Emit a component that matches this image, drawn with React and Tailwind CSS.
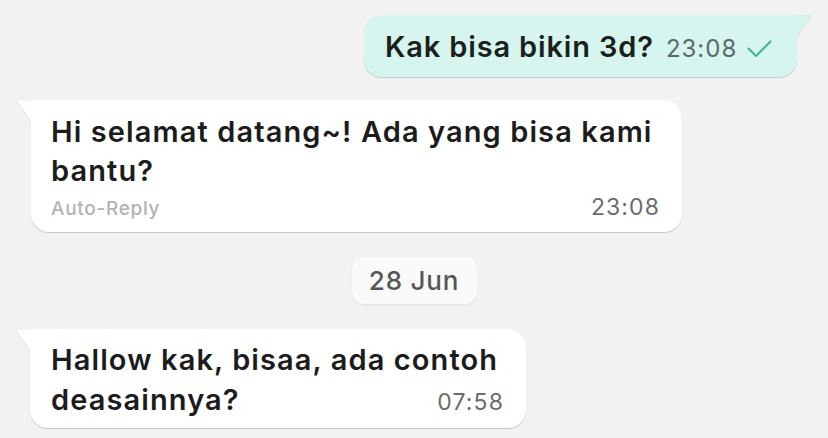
import React from "react";

function TailLeft() {
  return (
    <svg className="absolute left-[-15px] top-0" width="16" height="26" viewBox="0 0 16 26">
      <path d="M16 0 H3 Q0 0 1.6 2.4 L12 17 Q16 22 16 26 Z" fill="#ffffff" stroke="#d6d6d6" strokeWidth="0.6" />
      <rect x="15" y="0.6" width="2" height="26" fill="#ffffff" />
    </svg>
  );
}

function TailRight() {
  return (
    <svg className="absolute right-[-15px] top-0" width="16" height="26" viewBox="0 0 16 26">
      <path d="M0 0 H13 Q16 0 14.4 2.4 L4 17 Q0 22 0 26 Z" fill="#d5f5ee" stroke="#c4d6d1" strokeWidth="0.6" />
      <rect x="-1" y="0.6" width="2" height="26" fill="#d5f5ee" />
    </svg>
  );
}

export default function App() {
  return (
    <div className="w-[828px] h-[438px] overflow-hidden bg-[#f2f2f2] font-['Inter','Noto_Sans',sans-serif] flex flex-col pt-[15px]">
      <div className="flex justify-end pr-[31px]">
        <div className="relative h-[62px] w-[433px] rounded-[18px] rounded-tr-none bg-[#d5f5ee] shadow-[0_1px_1px_rgba(0,0,0,0.18)] flex items-baseline pl-[21px] pt-[12px]">
          <TailRight />
          <span className="text-[29px] font-semibold text-[#1b1f1e] leading-[39px] tracking-[0.85px]">Kak bisa bikin 3d?</span>
          <span className="ml-[12px] text-[24px] text-[#5b6a66] leading-none tracking-[1px]">23:08</span>
          <svg className="ml-[10px] self-start mt-[13px]" width="25" height="18" viewBox="0 0 25 18">
            <path d="M1.5 8.5 L9 16 L23.5 1.5" fill="none" stroke="#45b09b" strokeWidth="2" strokeLinecap="round" strokeLinejoin="round" />
          </svg>
        </div>
      </div>

      <div className="flex pl-[31px] mt-[23px]">
        <div className="relative w-[651px] h-[132px] rounded-[18px] rounded-tl-none bg-white shadow-[0_1px_1px_rgba(0,0,0,0.18)] pl-[20px] pr-[22px] pt-[12px]">
          <TailLeft />
          <div className="text-[29px] font-semibold text-[#1c1c1c] leading-[39px] tracking-[1.1px]">
            Hi selamat datang~! Ada yang bisa kami
            <br />
            bantu?
          </div>
          <div className="flex justify-between items-baseline mt-[6px]">
            <span className="text-[19px] text-[#b3b3b3] font-medium leading-none tracking-[0.7px]">Auto-Reply</span>
            <span className="text-[23px] text-[#6b6b6b] leading-none tracking-[1.1px]">23:08</span>
          </div>
        </div>
      </div>

      <div className="flex justify-center mt-[25px]">
        <div className="h-[47px] w-[125px] rounded-[12px] bg-[#fafafa] shadow-[0_1px_2px_rgba(0,0,0,0.08)] flex items-center justify-center">
          <span className="text-[26px] font-medium text-[#575757] leading-none tracking-[0.8px]">28 Jun</span>
        </div>
      </div>

      <div className="flex pl-[30px] mt-[25px]">
        <div className="relative w-[496px] h-[99px] rounded-[18px] rounded-tl-none bg-white shadow-[0_1px_1px_rgba(0,0,0,0.18)] pl-[21px] pr-[22px] pt-[11px]">
          <TailLeft />
          <div className="text-[29px] font-semibold text-[#1c1c1c] leading-[40px] tracking-[1.1px]">
            Hallow kak, bisaa, ada contoh
          </div>
          <div className="flex justify-between items-baseline">
            <span className="text-[29px] font-semibold text-[#1c1c1c] leading-[40px] tracking-[1.1px]">deasainnya?</span>
            <span className="text-[23px] text-[#6b6b6b] leading-none tracking-[1.1px]">07:58</span>
          </div>
        </div>
      </div>
    </div>
  );
}
